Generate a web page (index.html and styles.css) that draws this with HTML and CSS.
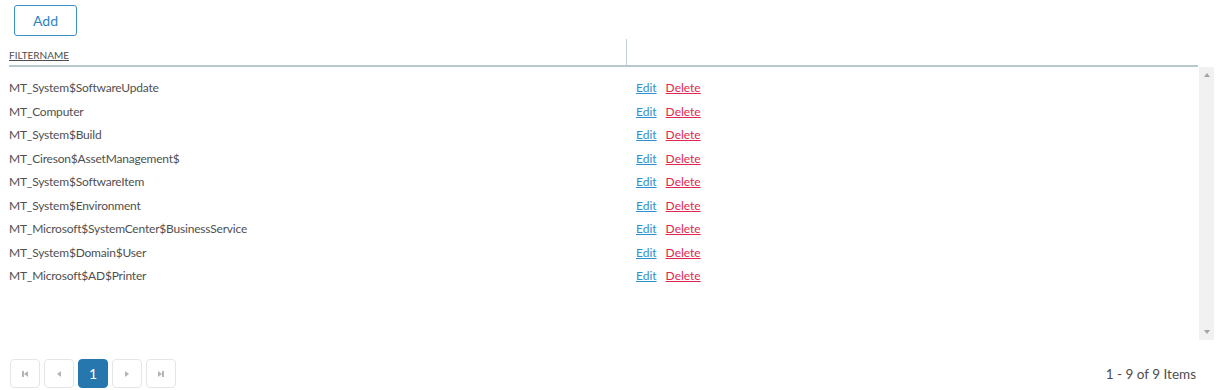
FILE: index.html
```html
<!DOCTYPE html>
<html>
<head>
    <title>Filters</title>
    <link rel="stylesheet" href="styles.css">
</head>
<body>
    <div class="toolbar">
        <button class="add-btn" type="button">Add</button>
    </div>

    <div class="grid">
        <div class="grid-header">
            <div class="col-name"><a href="#">FILTERNAME</a></div>
            <div class="col-actions"></div>
        </div>

        <div class="grid-body">
            <div class="rows">
                <div class="row"><div class="col-name">MT_System$SoftwareUpdate</div><div class="col-actions"><a class="edit" href="#">Edit</a><a class="delete" href="#">Delete</a></div></div>
                <div class="row"><div class="col-name">MT_Computer</div><div class="col-actions"><a class="edit" href="#">Edit</a><a class="delete" href="#">Delete</a></div></div>
                <div class="row"><div class="col-name">MT_System$Build</div><div class="col-actions"><a class="edit" href="#">Edit</a><a class="delete" href="#">Delete</a></div></div>
                <div class="row"><div class="col-name">MT_Cireson$AssetManagement$</div><div class="col-actions"><a class="edit" href="#">Edit</a><a class="delete" href="#">Delete</a></div></div>
                <div class="row"><div class="col-name">MT_System$SoftwareItem</div><div class="col-actions"><a class="edit" href="#">Edit</a><a class="delete" href="#">Delete</a></div></div>
                <div class="row"><div class="col-name">MT_System$Environment</div><div class="col-actions"><a class="edit" href="#">Edit</a><a class="delete" href="#">Delete</a></div></div>
                <div class="row"><div class="col-name">MT_Microsoft$SystemCenter$BusinessService</div><div class="col-actions"><a class="edit" href="#">Edit</a><a class="delete" href="#">Delete</a></div></div>
                <div class="row"><div class="col-name">MT_System$Domain$User</div><div class="col-actions"><a class="edit" href="#">Edit</a><a class="delete" href="#">Delete</a></div></div>
                <div class="row"><div class="col-name">MT_Microsoft$AD$Printer</div><div class="col-actions"><a class="edit" href="#">Edit</a><a class="delete" href="#">Delete</a></div></div>
            </div>
            <div class="scrollbar">
                <span class="arrow-up"></span>
                <span class="arrow-down"></span>
            </div>
        </div>

        <div class="pager">
            <div class="pager-nav">
                <span class="page-btn"><span class="first"></span></span>
                <span class="page-btn"><span class="prev"></span></span>
                <span class="page-btn active">1</span>
                <span class="page-btn"><span class="next"></span></span>
                <span class="page-btn"><span class="last"></span></span>
            </div>
            <div class="pager-info">1 - 9 of 9 Items</div>
        </div>
    </div>
</body>
</html>
```

FILE: styles.css
```css
* {
    margin: 0;
    padding: 0;
    box-sizing: border-box;
}

body {
    font-family: Lato, "Open Sans", sans-serif;
    font-size: 12px;
    color: #505050;
    background-color: #fff;
}

.toolbar {
    padding: 5px 0 0 14px;
    height: 39px;
}

.add-btn {
    width: 63px;
    height: 31px;
    border: 1px solid #3b8fc7;
    border-radius: 3px;
    background-color: #fff;
    color: #2d84c0;
    font-family: inherit;
    font-size: 14px;
}

.grid {
    margin-left: 9px;
    width: 1205px;
}

.grid-header {
    display: flex;
    height: 28px;
    margin-right: 16px;
    border-bottom: 2px solid #b9c7ce;
}

.grid-header .col-name {
    width: 617px;
    padding-top: 8px;
}

.grid-header .col-name a {
    color: #4d4d4d;
    font-size: 10px;
}

.grid-header .col-actions {
    border-left: 1px solid #c3cdd2;
}

.grid-body {
    display: flex;
    height: 273px;
}

.rows {
    flex: 1;
    padding-top: 9px;
}

.row {
    display: flex;
    height: 23.5px;
    align-items: center;
}

.col-name {
    width: 617px;
}

.rows .col-name {
    letter-spacing: -0.2px;
}

.col-actions {
    padding-left: 10px;
}

.col-actions a {
    margin-right: 9px;
}

.edit {
    color: #2f8fcf;
}

.delete {
    color: #e0284e;
}

.scrollbar {
    width: 15px;
    background-color: #f1f1f1;
    display: flex;
    flex-direction: column;
    justify-content: space-between;
    align-items: center;
    padding: 6px 0;
}

.arrow-up {
    border-left: 3px solid transparent;
    border-right: 3px solid transparent;
    border-bottom: 4px solid #a3a3a3;
}

.arrow-down {
    border-left: 3px solid transparent;
    border-right: 3px solid transparent;
    border-top: 4px solid #a3a3a3;
}

.pager {
    display: flex;
    justify-content: space-between;
    align-items: center;
    margin-top: 19px;
    padding-right: 18px;
}

.pager-nav {
    display: flex;
    gap: 4px;
    margin-left: 1px;
}

.page-btn {
    width: 30px;
    height: 29px;
    border: 1px solid #e3e6e8;
    border-radius: 4px;
    display: flex;
    align-items: center;
    justify-content: center;
}

.page-btn.active {
    background-color: #2677ad;
    border-color: #2677ad;
    color: #fff;
    font-size: 14px;
}

.prev,
.next,
.first,
.last {
    border-top: 3px solid transparent;
    border-bottom: 3px solid transparent;
}

.prev,
.first {
    border-right: 4px solid #b5b5b5;
}

.next,
.last {
    border-left: 4px solid #b5b5b5;
}

.first {
    box-shadow: -2px 0 0 0 #b5b5b5;
    margin-left: 2px;
}

.last {
    box-shadow: 2px 0 0 0 #b5b5b5;
    margin-right: 2px;
}

.pager-info {
    font-size: 13.5px;
    color: #4d4d4d;
}
```
